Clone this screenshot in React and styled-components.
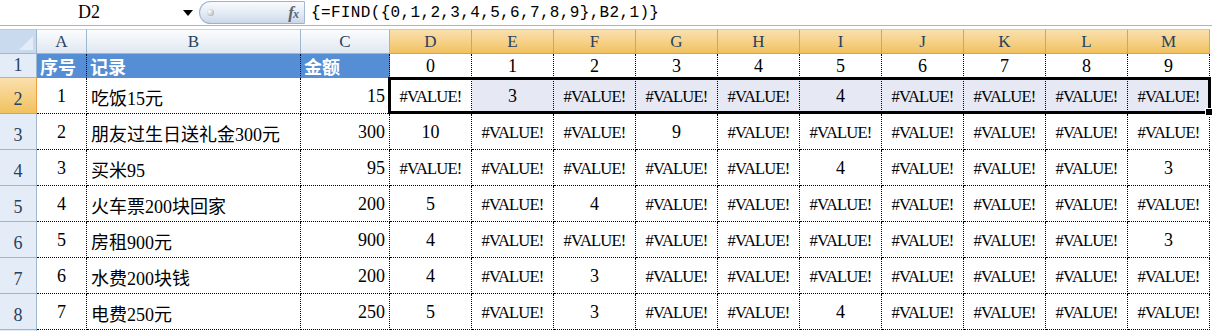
import React from 'react';
import styled, { createGlobalStyle, css } from 'styled-components';

const GlobalStyle = createGlobalStyle`
  html, body { margin: 0; padding: 0; background: #ffffff; }
  body { font-family: "Liberation Serif", "Noto Sans CJK SC", serif; }
`;

const V = '#VALUE!';
const cols = ['A', 'B', 'C', 'D', 'E', 'F', 'G', 'H', 'I', 'J', 'K', 'L', 'M'];

// rows 2..8
const rows = [
  [1, '吃饭15元', 15, [V, 3, V, V, V, 4, V, V, V, V]],
  [2, '朋友过生日送礼金300元', 300, [10, V, V, 9, V, V, V, V, V, V]],
  [3, '买米95', 95, [V, V, V, V, V, 4, V, V, V, 3]],
  [4, '火车票200块回家', 200, [5, V, 4, V, V, V, V, V, V, V]],
  [5, '房租900元', 900, [4, V, V, V, V, V, V, V, V, 3]],
  [6, '水费200块钱', 200, [4, V, 3, V, V, V, V, V, V, V]],
  [7, '电费250元', 250, [5, V, 3, V, V, 4, V, V, V, V]],
];

const App = () => {
  return (
    <>
      <GlobalStyle />
      <Window>
        <FormulaBar>
          <NameBox>
            <NameText>D2</NameText>
            <DropArrow />
          </NameBox>
          <FxPill>
            <Knob />
            <FxLabel>f<small>x</small></FxLabel>
          </FxPill>
          <FormulaText>{'{=FIND({0,1,2,3,4,5,6,7,8,9},B2,1)}'}</FormulaText>
        </FormulaBar>
        <Divider />

        <Sheet>
          <Corner />
          {cols.map((c, i) => (
            <ColHead key={c} $active={i >= 3}>{c}</ColHead>
          ))}

          <RowHead>1</RowHead>
          <TitleCell>序号</TitleCell>
          <TitleCell>记录</TitleCell>
          <TitleCell>金额</TitleCell>
          {[0, 1, 2, 3, 4, 5, 6, 7, 8, 9].map((n) => (
            <Cell key={n} $align="center">{n}</Cell>
          ))}

          {rows.map(([no, rec, amt, vals], r) => (
            <React.Fragment key={no}>
              <RowHead $tall $active={r === 0}>{r + 2}</RowHead>
              <Cell $align="center">{no}</Cell>
              <Cell $align="left">{rec}</Cell>
              <Cell $align="right">{amt}</Cell>
              {vals.map((v, i) => (
                <Cell key={i} $align="center" $picked={r === 0 && i > 0}>
                  {v === V ? <ErrText>{v}</ErrText> : v}
                </Cell>
              ))}
            </React.Fragment>
          ))}

          <RowHead $stub />
          <StubRow />

          <Selection>
            <Handle />
          </Selection>
        </Sheet>
      </Window>
    </>
  );
};

export default App;

const Window = styled.div`
  width: 1212px;
  height: 331px;
  overflow: hidden;
  background: #ffffff;
`;

const FormulaBar = styled.div`
  height: 25px;
  display: flex;
  align-items: stretch;
  background: #ffffff;
`;

const NameBox = styled.div`
  width: 199px;
  display: flex;
  align-items: center;
`;

const NameText = styled.span`
  width: 178px;
  text-align: center;
  font-size: 18px;
  color: #000;
`;

const DropArrow = styled.span`
  width: 0;
  height: 0;
  margin-left: 5px;
  border-left: 5px solid transparent;
  border-right: 5px solid transparent;
  border-top: 6px solid #000;
`;

const FxPill = styled.div`
  width: 106px;
  margin: 1px 0 0 0;
  height: 23px;
  box-sizing: border-box;
  border: 1px solid #9db2cf;
  border-right: 1px solid #a7b9d2;
  border-radius: 12px 0 0 12px;
  background: linear-gradient(#f8fafd 0%, #e3eaf4 55%, #cbd8ea 100%);
  display: flex;
  align-items: center;
  justify-content: space-between;
  padding: 0 6px 0 7px;
`;

const Knob = styled.span`
  width: 7px;
  height: 7px;
  border-radius: 50%;
  background: radial-gradient(circle at 35% 35%, #ffffff 0%, #c9ccd1 55%, #8e939a 100%);
`;

const FxLabel = styled.span`
  font-family: "Liberation Serif", serif;
  font-style: italic;
  font-weight: bold;
  font-size: 17px;
  color: #5c6470;
  letter-spacing: -1px;
  small { font-size: 12px; }
`;

const FormulaText = styled.div`
  margin-left: 6px;
  display: flex;
  align-items: center;
  font-family: "Liberation Mono", monospace;
  font-size: 16px;
  letter-spacing: 0.35px;
  color: #000;
  white-space: nowrap;
`;

const Divider = styled.div`
  height: 3px;
  border-top: 1px solid #a3b6cf;
  background: #ffffff;
`;

const Sheet = styled.div`
  position: relative;
  display: grid;
  grid-template-columns: 37px 50px 214px 89px repeat(10, 82px);
  grid-template-rows: 25px 24px repeat(7, 36px) 10px;
  font-size: 18px;
`;

const headBase = css`
  box-sizing: border-box;
  display: flex;
  justify-content: center;
  color: #27415f;
`;

const Corner = styled.div`
  box-sizing: border-box;
  border-right: 1px solid #9eb6ce;
  border-bottom: 1px solid #9eb6ce;
  border-top: 1px solid #b8cbe0;
  background: #c9d9ee;
  position: relative;
  &::after {
    content: '';
    position: absolute;
    right: 3px;
    bottom: 3px;
    border-left: 14px solid transparent;
    border-bottom: 14px solid #e3ecf7;
  }
`;

const ColHead = styled.div`
  ${headBase};
  align-items: center;
  font-size: 17px;
  border-right: 1px solid ${(p) => (p.$active ? '#f29b3d' : '#9eb6ce')};
  border-bottom: 1px solid ${(p) => (p.$active ? '#f29b3d' : '#9eb6ce')};
  border-top: 1px solid ${(p) => (p.$active ? '#f5c57e' : '#c5d3e3')};
  background: ${(p) =>
    p.$active
      ? 'linear-gradient(#fae0ad 0%, #f6d189 50%, #f1c15f 100%)'
      : 'linear-gradient(#fbfcfe 0%, #eef2f8 50%, #dfe7f1 100%)'};
`;

const RowHead = styled.div`
  ${headBase};
  align-items: ${(p) => (p.$tall ? 'flex-end' : 'center')};
  padding-bottom: ${(p) => (p.$tall ? '3px' : '0')};
  border-right: 1px solid ${(p) => (p.$active ? '#f29b3d' : '#9eb6ce')};
  border-bottom: 1px solid ${(p) => (p.$active ? '#f29b3d' : '#9eb6ce')};
  background: ${(p) =>
    p.$active ? 'linear-gradient(#fae0ad, #f1c15f)' : '#e4ecf7'};
`;

const Cell = styled.div`
  box-sizing: border-box;
  display: flex;
  align-items: center;
  padding: 2px 4px 0 4px;
  justify-content: ${(p) =>
    p.$align === 'left' ? 'flex-start' : p.$align === 'right' ? 'flex-end' : 'center'};
  border-right: 1px dotted #000;
  border-bottom: 1px dotted #000;
  background: ${(p) => (p.$picked ? '#e6e9f3' : '#ffffff')};
  color: #000;
  white-space: nowrap;
  overflow: hidden;
`;

const TitleCell = styled.div`
  box-sizing: border-box;
  display: flex;
  align-items: center;
  padding: 1px 4px 0 3px;
  background: #558ed5;
  color: #ffffff;
  font-weight: bold;
  border-right: 1px dotted #000;
  border-bottom: 1px solid #558ed5;
`;

const ErrText = styled.span`
  font-size: 16.5px;
  letter-spacing: -0.8px;
`;

const StubRow = styled.div`
  grid-column: 2 / -1;
  background: #ffffff;
`;

const Selection = styled.div`
  position: absolute;
  left: 388px;
  top: 48px;
  width: 823px;
  height: 37px;
  box-sizing: border-box;
  border: 3px solid #000;
  pointer-events: none;
`;

const Handle = styled.span`
  position: absolute;
  right: -5px;
  bottom: -5px;
  width: 6px;
  height: 6px;
  background: #000;
  border: 1px solid #fff;
`;
